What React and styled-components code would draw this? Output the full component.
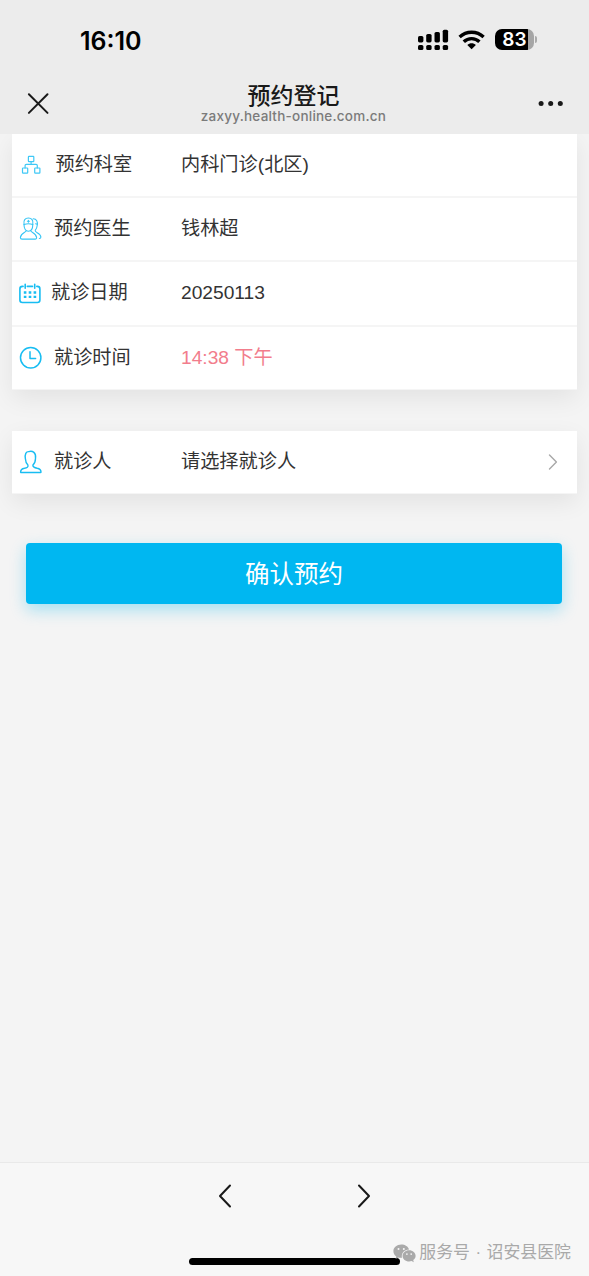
import React from 'react';
import styled, { createGlobalStyle } from 'styled-components';

export default function App() {
  return (
    <Page>
      <GlobalStyle />
      <Header>
        <StatusBar>
          <Clock>16:10</Clock>
          <StatusIcons>
            <SignalIcon />
            <WifiIcon />
            <Battery>
              <BatteryBody>83</BatteryBody>
              <BatteryCap />
            </Battery>
          </StatusIcons>
        </StatusBar>
        <NavBar>
          <CloseIcon />
          <TitleGroup>
            <Title>预约登记</Title>
            <Domain>zaxyy.health-online.com.cn</Domain>
          </TitleGroup>
          <MoreIcon />
        </NavBar>
      </Header>

      <Content>
        <Card>
          <Row $height={64}>
            <Label $gap={13.5}>
              <DepartmentIcon />
              预约科室
            </Label>
            <Value>内科门诊(北区)</Value>
          </Row>
          <Row $height={64}>
            <Label $gap={12}>
              <DoctorIcon />
              预约医生
            </Label>
            <Value>钱林超</Value>
          </Row>
          <Row $height={65} $lift={2}>
            <Label $gap={10}>
              <CalendarIcon />
              就诊日期
            </Label>
            <Value>20250113</Value>
          </Row>
          <Row $height={63} $lift={1}>
            <Label $gap={12}>
              <ClockIcon />
              就诊时间
            </Label>
            <Value $color="#f27d8c">14:38 下午</Value>
          </Row>
        </Card>

        <Card>
          <Row $height={63}>
            <Label $gap={12}>
              <PatientIcon />
              就诊人
            </Label>
            <Value>请选择就诊人</Value>
            <ArrowIcon />
          </Row>
        </Card>

        <SubmitButton type="button">确认预约</SubmitButton>
      </Content>

      <BottomBar>
        <BrowserNav>
          <Chevron points="12,2.5 2,13 12,23.5" />
          <Chevron points="2,2.5 12,13 2,23.5" />
        </BrowserNav>
        <HomeIndicator />
        <Watermark>
          <WechatIcon />
          服务号 · 诏安县医院
        </Watermark>
      </BottomBar>
    </Page>
  );
}

function SignalIcon() {
  return (
    <svg width="32" height="22" viewBox="0 0 32 22">
      <rect x="1" y="7" width="5.4" height="6.4" rx="1.6" />
      <rect x="9.2" y="5" width="5.4" height="8.4" rx="1.6" />
      <rect x="17.5" y="3" width="5.4" height="10.4" rx="1.6" />
      <rect x="25.7" y="0.7" width="5.4" height="12.7" rx="1.6" />
      <rect x="1" y="16" width="5.4" height="5" rx="1.6" />
      <rect x="9.2" y="16" width="5.4" height="5" rx="1.6" />
      <rect x="17.5" y="16" width="5.4" height="5" rx="1.6" />
      <rect x="25.7" y="16" width="5.4" height="5" rx="1.6" />
    </svg>
  );
}

function WifiIcon() {
  return (
    <svg width="28" height="20" viewBox="0 0 28 20">
      <g fill="none" stroke="#000" strokeWidth="3.4">
        <path d="M1.6 7C8.4 0.7 18.8 0.7 25.6 7" />
        <path d="M5.8 11.8C10.2 7.6 17 7.6 21.4 11.8" />
      </g>
      <path d="M9.3 15C11.7 12.8 15.5 12.8 17.9 15L13.6 19.2Z" />
    </svg>
  );
}

function CloseIcon() {
  return (
    <LineIcon width="22" height="22" viewBox="0 0 22 22" $color="#191919" $stroke={2}>
      <path d="M1.9 1.3 20.5 19.9M20.5 1.3 1.9 19.9" />
    </LineIcon>
  );
}

function MoreIcon() {
  return (
    <svg width="26" height="6" viewBox="0 0 26 6" fill="#191919">
      <circle cx="3.1" cy="2.6" r="2.5" />
      <circle cx="12.7" cy="2.6" r="2.5" />
      <circle cx="22.3" cy="2.6" r="2.5" />
    </svg>
  );
}

function DepartmentIcon() {
  return (
    <LineIcon width="22" height="22" viewBox="0 0 22 22" $color="#3fc8f6" $stroke={1.2}>
      <rect x="8.4" y="2.4" width="5.4" height="5.2" rx="0.6" />
      <rect x="2.5" y="14" width="5.2" height="5.2" rx="0.6" />
      <rect x="14.7" y="14" width="5.2" height="5.2" rx="0.6" />
      <path d="M11.1 7.6V10.3M5.1 14V11.5Q5.1 10.3 6.3 10.3H16.1Q17.3 10.3 17.3 11.5V14" />
    </LineIcon>
  );
}

function DoctorIcon() {
  return (
    <LineIcon width="22" height="24" viewBox="0 0 22 24" $color="#36c5f5" $stroke={1.1}>
      <path d="M4 7.2C3.3 3.2 5.2 1 8.4 1S13.5 3.2 12.8 7.2C12.8 11.3 11.4 14.2 8.4 14.2S4 11.3 4 7.2Z" />
      <path d="M4 7.6Q8.4 6 12.8 7.6M8.4 3.2V5.2M7.4 4.2H9.4" />
      <path d="M6.1 13.8C5.9 15.4.7 16.1.4 20.4Q.4 22.1 2 22.1H15.1Q16.7 22.1 16.6 20.4C16.2 16.1 11 15.4 10.8 13.8" />
      <path d="M13.2 1.8C16.8 1.9 17.7 4.6 17.3 8C17.1 10.3 16.5 11.8 15.2 13.3C14.3 15.9 20.6 15.4 20.9 20Q20.9 21.3 19.3 21.5" />
      <path d="M15.6 6.8Q16.6 6.8 17.3 7.3" />
    </LineIcon>
  );
}

function CalendarIcon() {
  return (
    <LineIcon width="21" height="22" viewBox="1 -0.5 21 22" $color="#18bdf2" $stroke={1.6}>
      <path d="M4.1 3.9H3.4Q.9 3.9.9 6.4V17.5Q.9 20 3.4 20H18.4Q20.9 20 20.9 17.5V6.4Q20.9 3.9 18.4 3.9H17.8M8.3 3.9H13.5M6.2 1.7V5.8M15.7 1.7V5.8" />
      <path
        d="M4.8 10H7.4M9.7 10H12.3M14.6 10H17.2M4.8 14.4H7.4M9.7 14.4H12.3M14.6 14.4H17.2"
        strokeWidth="2.4"
        strokeLinecap="butt"
      />
    </LineIcon>
  );
}

function ClockIcon() {
  return (
    <LineIcon width="22" height="22" viewBox="0 0 22 22" $color="#18bdf2" $stroke={1.5}>
      <circle cx="10.7" cy="10.8" r="10.2" />
      <path d="M10 4.8V11.4H15.6" />
    </LineIcon>
  );
}

function PatientIcon() {
  return (
    <LineIcon width="22" height="24" viewBox="0 0 22 24" $color="#18bdf2" $stroke={1.4}>
      <path d="M7.9 15C6.2 13.5 5.5 11.5 5.4 8.8C4.6 4.2 6.1 1.4 8.8 1.6C12.5.5 16.4 2.5 15.5 8.4C15.4 11.6 14.4 13.7 12.9 15C12.7 17.2 14.5 17.8 17.2 18.3Q20.9 18.9 21 22Q21 22.5 20.4 22.5H1.2Q.6 22.5.6 22Q.7 18.9 4.4 18.3C7 17.8 8.5 17.2 7.9 15Z" />
    </LineIcon>
  );
}

function ArrowIcon() {
  return (
    <LineIcon width="10" height="16" viewBox="0 0 10 16" $color="#a8a8a8" $stroke={1.4}>
      <path d="M1.5 1 8.4 8 1.5 15" />
    </LineIcon>
  );
}

function Chevron({ points }) {
  return (
    <LineIcon width="14" height="25" viewBox="0 0 14 25" $color="#191919" $stroke={2}>
      <polyline points={points} />
    </LineIcon>
  );
}

function WechatIcon() {
  return (
    <svg width="23" height="19" viewBox="0 0 23 19">
      <path
        fill="#aaa"
        d="M8.3.5C3.8.5.4 3.5.4 7.2C.4 9.4 1.6 11.2 3.3 12.4L2.5 14.9L5.3 13.4Q7 14 9 13.8C7.9 9.4 11.3 5.7 16.1 5.5C15.2 2.5 12 .5 8.3.5Z"
      />
      <path
        fill="#aaa"
        d="M16.1 6.3C12.4 6.3 9.6 8.8 9.6 11.9S12.5 17.4 16.1 17.4Q17.4 17.4 18.6 17L20.8 18.2L20.2 16C21.7 15 22.6 13.5 22.6 11.9C22.6 8.8 19.8 6.3 16.1 6.3Z"
      />
      <g fill="#f7f7f7">
        <circle cx="5.5" cy="5.1" r="1" />
        <circle cx="10.8" cy="5.1" r="1" />
        <circle cx="13.9" cy="10.1" r=".85" />
        <circle cx="18.2" cy="10.1" r=".85" />
      </g>
    </svg>
  );
}

const GlobalStyle = createGlobalStyle`
  * {
    box-sizing: border-box;
  }

  body {
    margin: 0;
    background: #f4f4f4;
    font-family: "Liberation Sans", "Noto Sans CJK SC", sans-serif;
  }

  svg {
    display: block;
    flex-shrink: 0;
  }
`;

const Page = styled.div`
  display: flex;
  flex-direction: column;
  width: 589px;
  height: 1276px;
  overflow: hidden;
`;

/** svg - 线条图标 */
const LineIcon = styled.svg`
  overflow: visible;
  fill: none;
  stroke: ${({ $color }) => $color};
  stroke-width: ${({ $stroke }) => $stroke}px;
  stroke-linecap: round;
  stroke-linejoin: round;
`;

const Header = styled.header`
  position: relative;
  z-index: 1;
  height: 134px;
  background: #ececec;
`;

const StatusBar = styled.div`
  display: flex;
  justify-content: space-between;
  height: 73px;
  padding: 24px 52px 0 80px;
`;

const Clock = styled.div`
  font: 600 25px/34px Inter, sans-serif;
  color: #000;
`;

const StatusIcons = styled.div`
  display: flex;
  align-items: center;
  gap: 9px;
  height: 31px;
`;

const Battery = styled.div`
  display: flex;
  align-items: center;
  gap: 1px;
`;

const BatteryBody = styled.div`
  width: 39px;
  height: 21px;
  border-radius: 7px;
  background: linear-gradient(90deg, #000 33px, #a6a6a6 33px);
  color: #fff;
  font: 600 19px/22px Inter, sans-serif;
  text-align: center;
`;

const BatteryCap = styled.div`
  width: 2px;
  height: 7px;
  border-radius: 0 3px 3px 0;
  background: #ababab;
`;

const NavBar = styled.div`
  display: flex;
  align-items: center;
  justify-content: space-between;
  height: 61px;
  padding: 0 25px 0 27px;
`;

const TitleGroup = styled.div`
  display: flex;
  flex-direction: column;
  align-items: center;
  padding-bottom: 3px;
`;

const Title = styled.h1`
  margin: 0;
  font: 500 23px/28px "Noto Sans CJK SC", sans-serif;
  color: #191919;
`;

const Domain = styled.div`
  font: 500 13.5px/16px Inter, sans-serif;
  letter-spacing: 0.23px;
  color: #7b7b7b;
`;

const Content = styled.main`
  flex: 1;
  padding: 0 12px;
`;

const Card = styled.section`
  margin-bottom: 41px;
  background: #fff;
  box-shadow: 0 8px 24px rgba(0, 0, 0, 0.075);
`;

const Row = styled.div`
  display: flex;
  align-items: center;
  height: ${({ $height }) => $height}px;
  padding: 0 19px ${({ $lift }) => $lift || 0}px 8px;
  border-bottom: 2px solid #f5f5f5;
  font-size: 19.2px;
  line-height: 28px;
  color: #333;

  &:last-child {
    border-bottom: 1px solid #f5f5f5;
  }
`;

const Label = styled.div`
  display: flex;
  align-items: center;
  gap: ${({ $gap }) => $gap}px;
  width: 161px;
`;

const Value = styled.div`
  flex: 1;
  color: ${({ $color }) => $color || '#333'};
`;

const SubmitButton = styled.button`
  display: block;
  width: 536px;
  height: 61px;
  margin: 49px 0 0 14.4px;
  padding: 0 1px 2px 0;
  border: 0;
  border-radius: 4px;
  background: #00b7f1;
  box-shadow: 0 6px 16px rgba(0, 183, 241, 0.32);
  color: #fff;
  font: 400 24.5px/59px "Noto Sans CJK SC", sans-serif;
`;

const BottomBar = styled.footer`
  position: relative;
  height: 114px;
  border-top: 1px solid #e9e9e9;
  background: #f7f7f7;
`;

const BrowserNav = styled.nav`
  display: flex;
  justify-content: center;
  gap: 125px;
  padding-top: 20px;
`;

const HomeIndicator = styled.div`
  position: absolute;
  left: 189px;
  bottom: 11px;
  width: 211px;
  height: 7px;
  border-radius: 4px;
  background: #000;
`;

/** div - 右下角服务号水印 */
const Watermark = styled.div`
  position: absolute;
  right: 18px;
  bottom: 11px;
  display: flex;
  align-items: center;
  gap: 3px;
  font: 400 16.9px/24px "Liberation Sans", "Noto Sans CJK SC", sans-serif;
  word-spacing: 0.8px;
  color: #a9a9a9;
  white-space: nowrap;
`;
